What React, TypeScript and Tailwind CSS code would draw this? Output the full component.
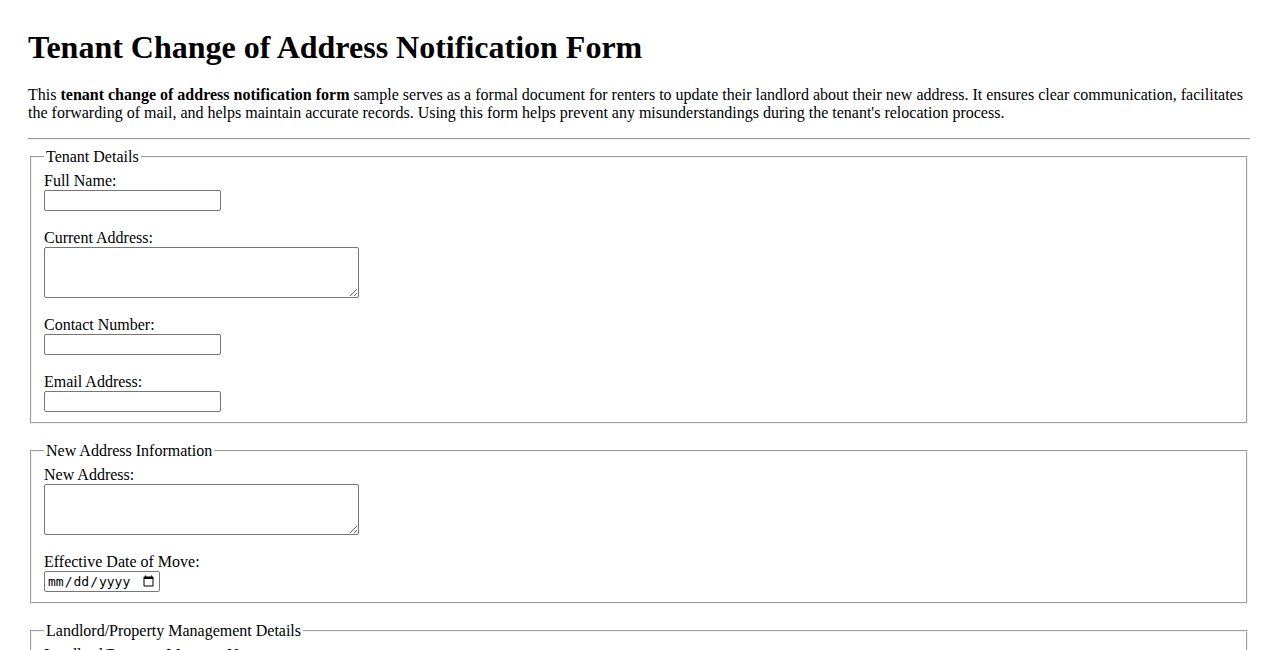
import type { ReactNode } from "react";

const serif = "font-['Liberation_Serif','Times_New_Roman',serif]";

const textBox = "block h-[21px] w-[177px] rounded-[2px] border border-[#767676] bg-white px-[2px] text-[13px]";
const areaBox = "block h-[51px] w-[315px] resize rounded-[2px] border border-[#767676] bg-white px-[2px] text-[13px]";

function Field({ label, id, children }: { label: string; id: string; children: ReactNode }) {
  return (
    <div>
      <label htmlFor={id} className="block leading-[18px]">
        {label}
      </label>
      {children}
    </div>
  );
}

function Section({ title, children }: { title: string; children: ReactNode }) {
  return (
    <fieldset className="mx-[2px] border-2 border-[#f2f2f2] px-3 pb-[10px] pt-[5.6px] [border-style:groove]">
      <legend className="px-[2px] leading-[18.4px]">{title}</legend>
      <div className="flex flex-col gap-[18px]">{children}</div>
    </fieldset>
  );
}

export default function App() {
  return (
    <div className={`${serif} min-h-screen bg-white px-[28px] pb-10 text-[16px] text-black`}>
      <h1 className="mt-[29px] text-[32px] font-bold leading-[37px]">
        Tenant Change of Address Notification Form
      </h1>
      <p className="mt-[20px] leading-[18.4px]">
        This <strong>tenant change of address notification form</strong> sample serves as a formal
        document for renters to update their landlord about their new address. It ensures clear
        communication, facilitates the forwarding of mail, and helps maintain accurate records. Using
        this form helps prevent any misunderstandings during the tenant's relocation process.
      </p>
      <hr className="mt-[15px] mb-[8px] h-0 border-t border-b border-t-[#9a9a9a] border-b-[#eeeeee]" />

      <form className="flex flex-col gap-[18px]">
        <Section title="Tenant Details">
          <Field label="Full Name:" id="fullName">
            <input id="fullName" type="text" className={textBox} />
          </Field>
          <Field label="Current Address:" id="currentAddress">
            <textarea id="currentAddress" className={areaBox} />
          </Field>
          <Field label="Contact Number:" id="phone">
            <input id="phone" type="tel" className={textBox} />
          </Field>
          <Field label="Email Address:" id="email">
            <input id="email" type="email" className={textBox} />
          </Field>
        </Section>

        <Section title="New Address Information">
          <Field label="New Address:" id="newAddress">
            <textarea id="newAddress" className={areaBox} />
          </Field>
          <Field label="Effective Date of Move:" id="moveDate">
            <input
              id="moveDate"
              type="date"
              className="block h-[21px] w-[116px] rounded-[2px] border border-[#767676] bg-white px-[2px] font-['DejaVu_Sans_Mono',monospace] text-[13px]"
            />
          </Field>
        </Section>

        <Section title="Landlord/Property Management Details">
          <Field label="Landlord/Property Manager Name:" id="landlordName">
            <input id="landlordName" type="text" className={textBox} />
          </Field>
          <Field label="Landlord Address:" id="landlordAddress">
            <textarea id="landlordAddress" className={areaBox} />
          </Field>
        </Section>
      </form>
    </div>
  );
}
